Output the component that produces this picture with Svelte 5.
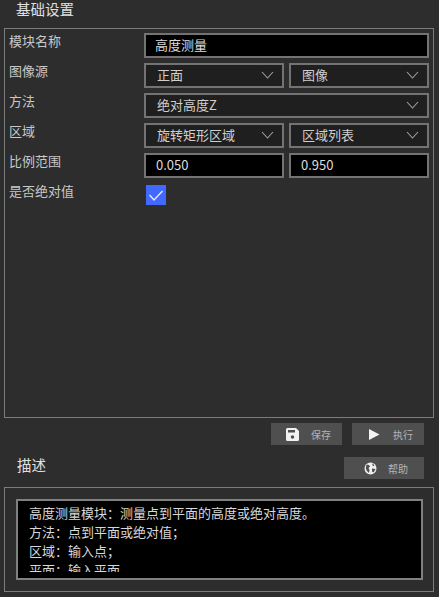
<script>
  const desc = [
    '高度测量模块：测量点到平面的高度或绝对高度。',
    '方法：点到平面或绝对值；',
    '区域：输入点；',
    '平面：输入平面。'
  ]
</script>

{#snippet sel(text)}
  <div class="sel">
    <span>{text}</span>
    <svg width="13" height="8" viewBox="0 0 13 8"><path d="M1 1l5.500 6L12 1" fill="none" stroke="#a0a0a0" stroke-width="1.1" /></svg>
  </div>
{/snippet}

<div class="page">
  <h2 class="top">基础设置</h2>
  <section class="panel">
    <div class="form">
      <div class="lbl">模块名称</div>
      <div class="inp wide name">高度测量</div>

      <div class="lbl">图像源</div>
      {@render sel('正面')}
      {@render sel('图像')}

      <div class="lbl">方法</div>
      <div class="wide">{@render sel('绝对高度Z')}</div>

      <div class="lbl">区域</div>
      {@render sel('旋转矩形区域')}
      {@render sel('区域列表')}

      <div class="lbl">比例范围</div>
      <div class="inp">0.050</div>
      <div class="inp">0.950</div>

      <div class="lbl">是否绝对值</div>
      <div class="check">
        <svg width="20" height="20" viewBox="0 0 20 20"><path d="M3.500 10l4.500 5 8.500-9" fill="none" stroke="#e4e8ff" stroke-width="1.4" /></svg>
      </div>
    </div>
  </section>

  <div class="actions">
    <div class="btn save">
      <svg width="13" height="13" viewBox="0 0 13 13"><path fill-rule="evenodd" d="M1.500 0H10l3 3v8.500a1.500 1.500 0 0 1-1.500 1.500h-10A1.500 1.500 0 0 1 0 11.500v-10A1.500 1.500 0 0 1 1.500 0zM2 2v2.500h7V2zM6.500 7.200a1.800 1.800 0 1 0 0 3.600 1.800 1.800 0 0 0 0-3.600z" fill="#f2f2f2" /></svg>
      <span>保存</span>
    </div>
    <div class="btn run">
      <svg width="11" height="11" viewBox="0 0 11 11"><path d="M0 0l10.500 5.500L0 11z" fill="#f2f2f2" /></svg>
      <span>执行</span>
    </div>
  </div>

  <div class="descHead">
    <h2>描述</h2>
    <div class="btn help">
      <svg width="13" height="13" viewBox="0 0 13 13"><circle cx="6.500" cy="6.500" r="6" fill="#f0f0f0" /><path d="M2.500 2.500l2.500.5 1 1.500-1.500 1.500L5.500 8 5 11 3 9 1.800 6.500zM8 1.500l2.500 1.500L9 4.500zM8 6.500l3.500.5-2 3.500L8 9.500z" fill="#4f4f4f" /></svg>
      <span>帮助</span>
    </div>
  </div>

  <section class="panel bottom">
    <div class="text">
      <div class="lines">
        {#each desc as line}
          <p>{line}</p>
        {/each}
      </div>
    </div>
  </section>
</div>

<style>
  :global(body) {
    background: #2d2d2d;
  }

  .page {
    height: 597px;
    box-sizing: border-box;
    display: flex;
    flex-direction: column;
    padding: 0 5px 5px 4px;
    font-family: "Noto Sans CJK SC", "Liberation Sans", sans-serif;
    font-size: 13px;
    color: #d4d4d4;
    overflow: hidden;
  }

  h2 {
    margin: 0;
    font-size: 14.5px;
    font-weight: 400;
    color: #e0e0e0;
    line-height: 16px;
  }

  .top {
    height: 27px;
    padding: 1px 0 0 12px;
  }

  .panel {
    height: 390px;
    box-sizing: border-box;
    border: 1px solid #7c7c7c;
    padding: 4px 3px 0 4px;
  }

  .form {
    display: grid;
    grid-template-columns: 130px 140px 140px;
    column-gap: 5px;
    row-gap: 5px;
    grid-auto-rows: 25px;
  }

  .lbl {
    grid-column: 1;
    line-height: 16px;
    color: #c8c8c8;
    white-space: nowrap;
  }

  .wide {
    grid-column: 2 / 4;
  }

  .inp,
  .sel {
    box-sizing: border-box;
    height: 25px;
    border: 2px solid #737373;
    padding-bottom: 2px;
    display: flex;
    align-items: center;
    justify-content: space-between;
    color: #dcdcdc;
    line-height: 1;
  }

  .inp {
    background: #000;
    padding-left: 10px;
  }

  .name {
    padding-left: 9px;
  }

  .sel {
    background: #1f1f1f;
    padding-left: 11px;
    padding-right: 8px;
    color: #cfcfcf;
  }

  .check {
    width: 20px;
    height: 20px;
    margin: 2px 0 0 2px;
    background: #4169ff;
  }

  .check svg {
    display: block;
  }

  .actions {
    display: flex;
    justify-content: flex-end;
    gap: 10px;
    padding: 5px 10px 0 0;
  }

  .btn {
    height: 22px;
    box-sizing: border-box;
    background: #4f4f4f;
    display: flex;
    align-items: center;
    color: #b4b4b4;
    font-size: 10px;
  }

  .btn svg {
    flex: none;
  }

  .save {
    width: 71px;
    padding-left: 15px;
    gap: 12px;
  }

  .run {
    width: 72px;
    padding-left: 17px;
    gap: 13px;
  }

  .help {
    width: 80px;
    padding-left: 20px;
    gap: 11px;
  }

  .descHead {
    height: 42px;
    display: flex;
    justify-content: space-between;
    align-items: flex-start;
    padding: 12px 10px 0 13px;
    box-sizing: border-box;
  }

  .bottom {
    height: 105px;
    padding: 11px 10px 11px 11px;
  }

  .text {
    height: 81px;
    box-sizing: border-box;
    background: #000;
    border: 2px solid #808080;
    padding: 2px 11px 6px;
  }

  .lines {
    height: 100%;
    overflow: hidden;
  }

  .text p {
    margin: 0;
    line-height: 19px;
    white-space: nowrap;
    color: #d8d8d8;
  }
</style>
